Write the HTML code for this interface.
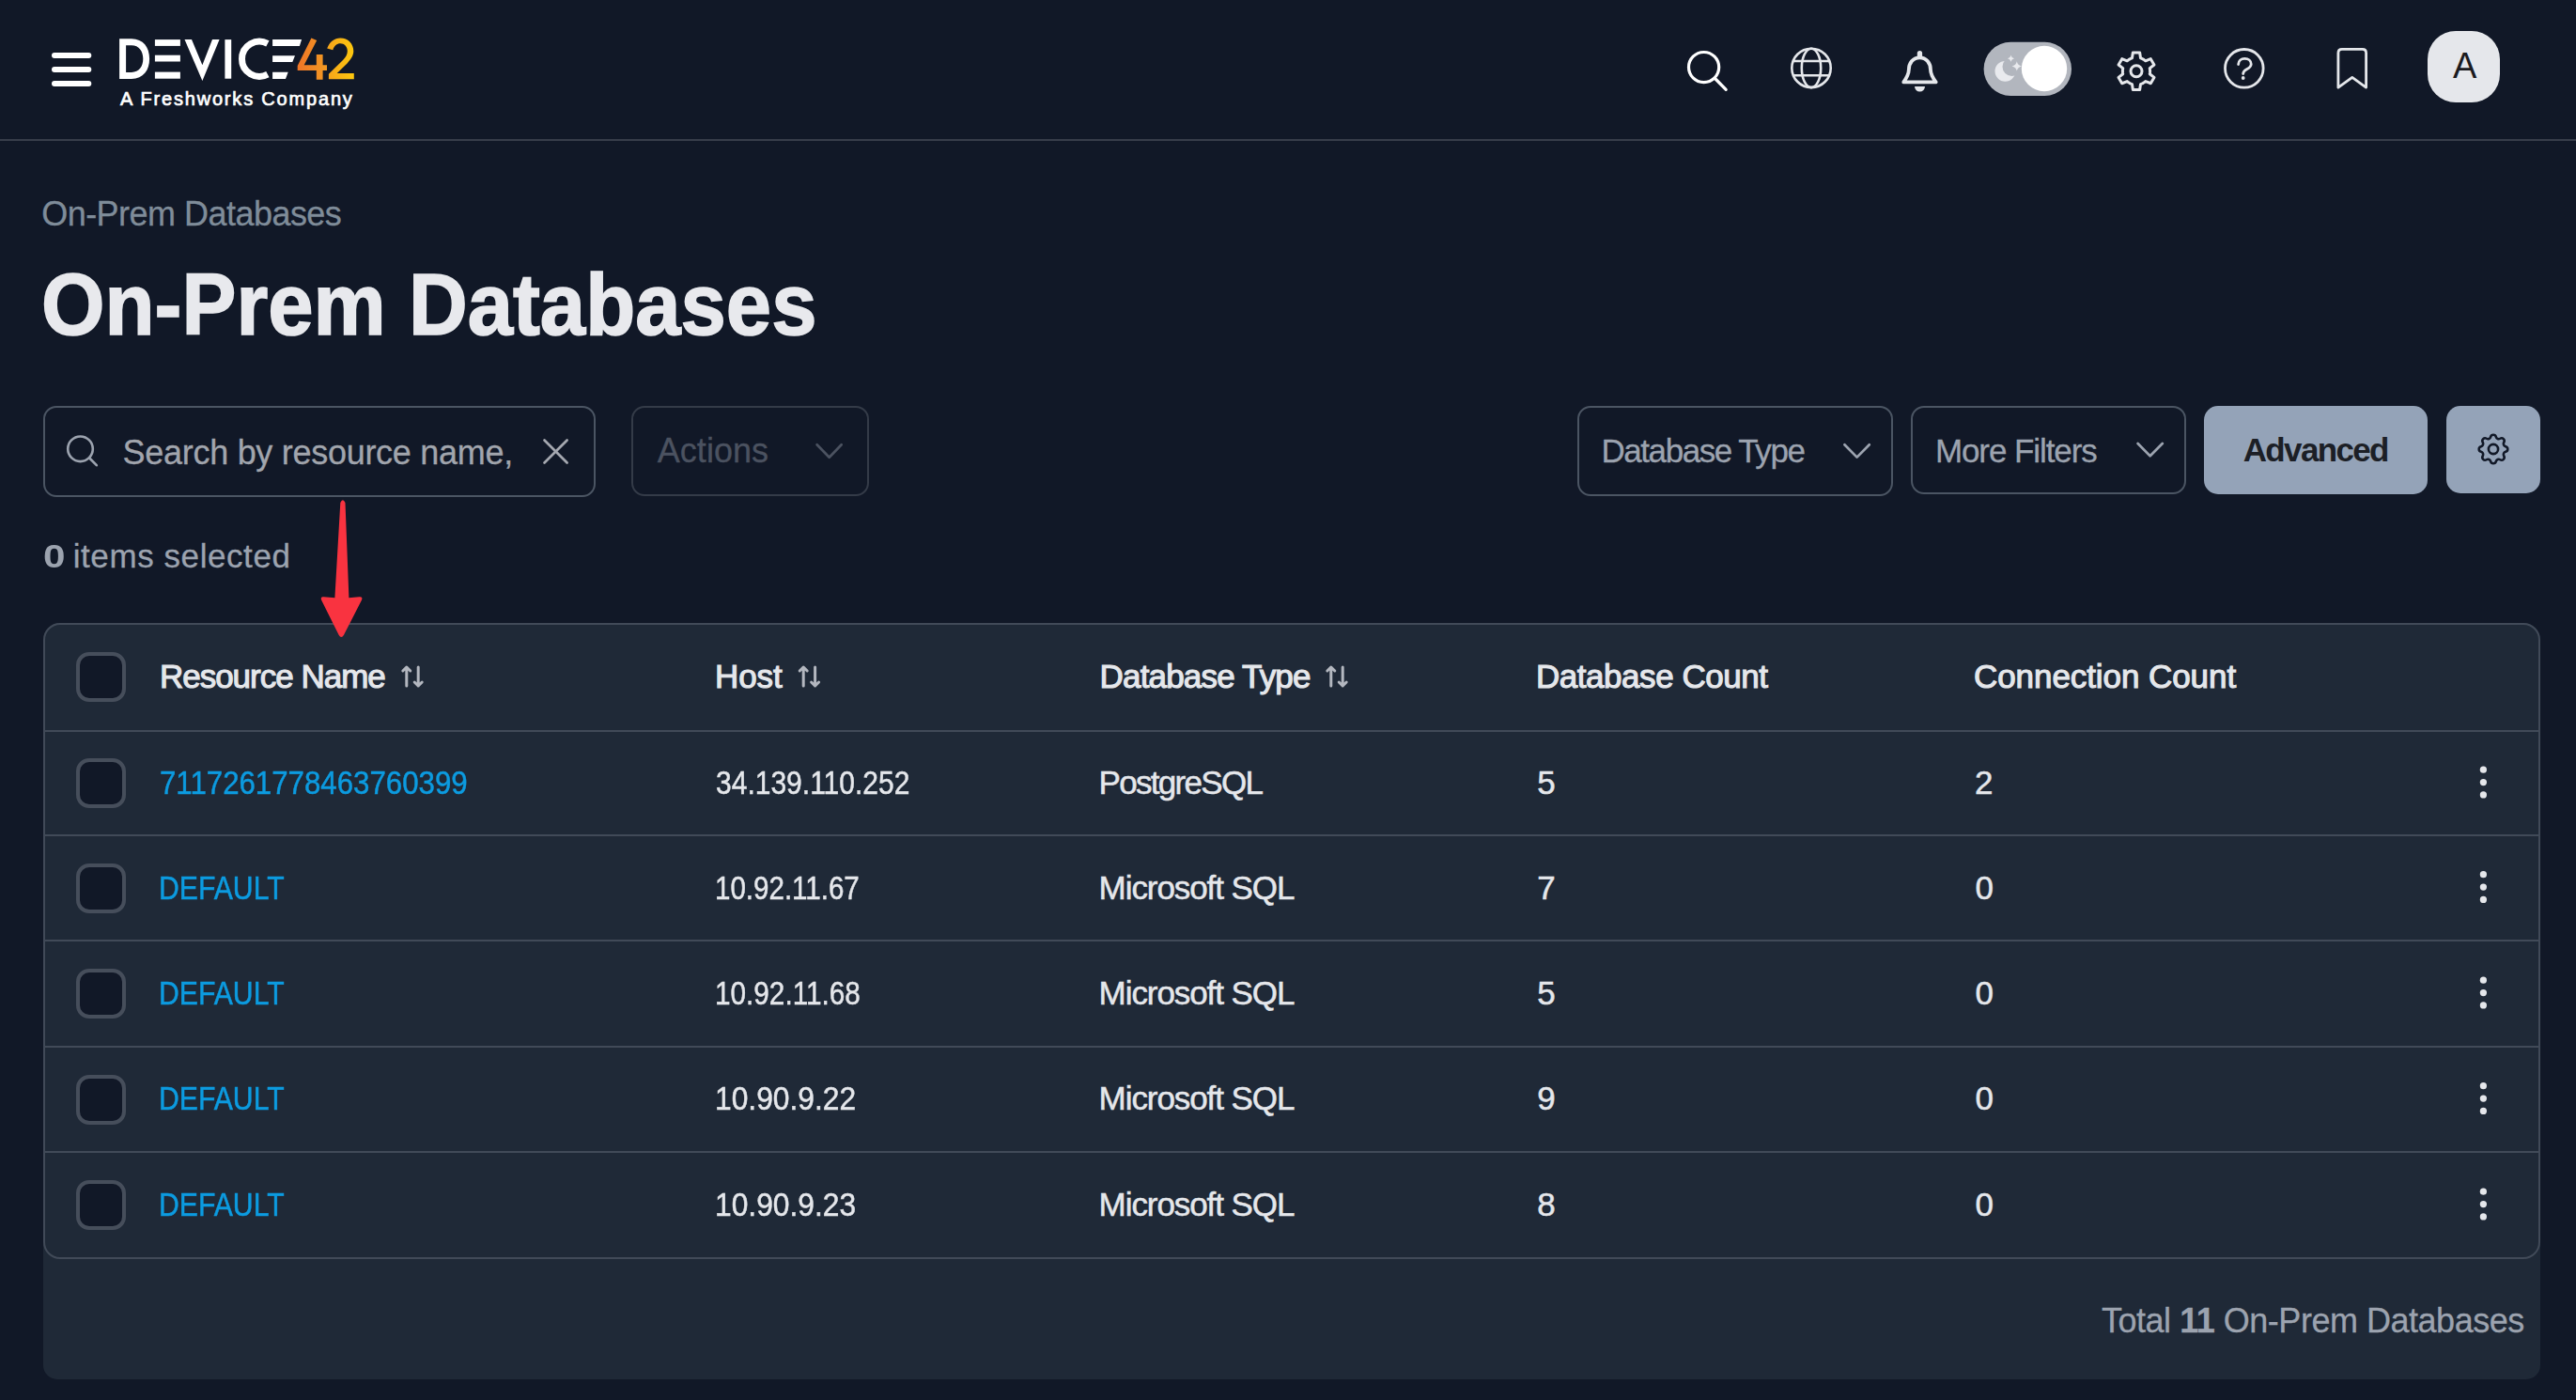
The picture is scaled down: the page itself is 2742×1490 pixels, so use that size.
<!DOCTYPE html>
<html><head><meta charset="utf-8"><title>On-Prem Databases</title>
<style>
html,body{margin:0;padding:0;}
body{width:2742px;height:1490px;overflow:hidden;background:#111827;position:relative;font-family:'Liberation Sans',sans-serif;}
.b{position:absolute;box-sizing:border-box;}
.t{position:absolute;white-space:nowrap;font-family:'Liberation Sans',sans-serif;}
.ov{position:absolute;left:0;top:0;}
.cb{position:absolute;box-sizing:border-box;left:81px;width:53px;height:53px;border:4px solid #464e5b;border-radius:14px;background:#111827;}
.rl{position:absolute;left:48px;width:2654px;height:2px;background:#414a58;}
</style></head><body>
<div class="b" style="left:0;top:148px;width:2742px;height:2px;background:#373d4a"></div>
<div class="b" style="left:46px;top:432px;width:588px;height:96.5px;border:2px solid #4b5563;border-radius:14px"></div>
<div class="b" style="left:672px;top:432px;width:253px;height:96px;border:2px solid #343b48;border-radius:14px"></div>
<div class="b" style="left:1679px;top:432px;width:336px;height:96px;border:2px solid #4b5563;border-radius:14px"></div>
<div class="b" style="left:2034px;top:432px;width:293px;height:94px;border:2px solid #4b5563;border-radius:14px"></div>
<div class="b" style="left:2346px;top:432px;width:238px;height:94px;background:#94a3b8;border-radius:15px"></div>
<div class="b" style="left:2604px;top:432px;width:100px;height:93px;background:#94a3b8;border-radius:15px"></div>
<div class="b" style="left:46px;top:663px;width:2658px;height:805px;background:#1f2937;border-radius:18px 18px 15px 15px"></div>
<div class="b" style="left:46px;top:663px;width:2658px;height:677px;border:2px solid #414a58;border-radius:18px"></div>
<div class="rl" style="top:777px"></div>
<div class="rl" style="top:888px"></div>
<div class="rl" style="top:1000px"></div>
<div class="rl" style="top:1113px"></div>
<div class="rl" style="top:1225px"></div>
<div class="cb" style="top:694px"></div>
<div class="cb" style="top:807px"></div>
<div class="cb" style="top:918.5px"></div>
<div class="cb" style="top:1031px"></div>
<div class="cb" style="top:1143.5px"></div>
<div class="cb" style="top:1256px"></div>
<svg class="ov" width="2742" height="1490" viewBox="0 0 2742 1490">
<defs><linearGradient id="g4" x1="0" y1="0" x2="1" y2="0"><stop offset="0" stop-color="#ef7527"/><stop offset="1" stop-color="#f39a22"/></linearGradient><linearGradient id="g2" x1="0" y1="0" x2="1" y2="0"><stop offset="0" stop-color="#f6a41b"/><stop offset="1" stop-color="#fdc80e"/></linearGradient></defs>
<rect x="55" y="56" width="42.3" height="6" rx="3" fill="#fff"/>
<rect x="55" y="71" width="42.3" height="6" rx="3" fill="#fff"/>
<rect x="55" y="86" width="42.3" height="6" rx="3" fill="#fff"/>
<path fill="#fff" fill-rule="evenodd" d="M127.1,41.3 H140 C152.5,41.3 159.1,50.5 159.1,62.6 C159.1,74.8 152.5,84 140,84 H127.1 Z M134.1,48.2 H140 C148,48.2 152.3,54.5 152.3,62.6 C152.3,70.8 148,76.9 140,76.9 H134.1 Z"/>
<rect x="164.9" y="42.1" width="27" height="6.8" fill="#fff"/>
<rect x="164.9" y="58.7" width="27" height="6.8" fill="#fff"/>
<rect x="164.9" y="76.6" width="27" height="7.1" fill="#fff"/>
<path fill="#fff" d="M196.5,42.1 H204 L215.4,69.3 L226,42.1 H233.6 L215.4,86 Z"/>
<rect x="239.4" y="42.1" width="6.8" height="41.6" fill="#fff"/>
<path fill="none" stroke="#fff" stroke-width="7" d="M284.9,46.3 A18.6,18.6 0 1 0 284.9,79.1"/>
<path fill="#fff" d="M290.1,42.1 H321.1 L318.9,48.9 H290.1 Z M290.1,59.2 H314 L311.3,66 H290.1 Z M290.1,76.8 H306.7 L304,83.9 H290.1 Z"/>
<path fill="url(#g4)" d="M331.4,40.4 L337.2,43 L323.7,69.2 H336.8 V58.1 H343.6 V69.2 H348 V75 H343.6 V84.7 H336.8 V75 H316.7 V70 Z"/>
<path fill="url(#g2)" d="M348.2,51.5 C350.5,44.6 356,40.4 362.3,40.4 C370.5,40.4 376.3,46.5 376.3,54.3 C376.3,59.5 373.5,63 369.8,67.2 L358.7,78 H376.8 V84.2 H349.9 V78.8 L365,64 C368.3,60.5 369.8,58 369.8,54.3 C369.8,49.6 366.5,46.3 362.3,46.3 C358.6,46.3 355.8,48.6 354.3,53.3 Z"/>
<g fill="none" stroke="#fff" stroke-width="3.2" stroke-linecap="round"><circle cx="1813.6" cy="71.6" r="16.1"/><line x1="1825.5" y1="83.5" x2="1837.2" y2="95.3"/></g>
<g fill="none" stroke="#e5e7eb" stroke-width="2.6"><circle cx="1928" cy="72.4" r="20.7"/><ellipse cx="1928" cy="72.4" rx="10.2" ry="20.7"/><line x1="1908.5" y1="65" x2="1947.5" y2="65"/><line x1="1908.5" y1="80.3" x2="1947.5" y2="80.3"/></g>
<g fill="#e5e7eb"><rect x="2040.8" y="53.9" width="5.3" height="8" rx="2.65"/><path d="M2038,92 A5.5,5.5 0 0 0 2049,92 Z"/></g>
<path fill="none" stroke="#e5e7eb" stroke-width="3.8" stroke-linejoin="round" d="M2031.8,74.5 C2031.8,67 2036.5,61.3 2043.4,61.3 C2050.3,61.3 2055,67 2055,74.5 C2055,79 2056.8,82 2060.6,87.4 L2026.3,87.4 C2030,82 2031.8,79 2031.8,74.5 Z"/>
<rect x="2111.6" y="44.8" width="93.4" height="57.2" rx="28.6" fill="#b2b6be"/>
<circle cx="2176" cy="73" r="24.2" fill="#fff"/>
<mask id="mm"><rect x="2100" y="40" width="60" height="60" fill="#fff"/><circle cx="2141.4" cy="71.0" r="9.9" fill="#000"/></mask>
<circle cx="2134.4" cy="75.8" r="10.9" fill="#e9eaee" mask="url(#mm)"/>
<path fill="#e9eaee" d="M2140.50,58.80 Q2141.06,61.74 2144.00,62.30 Q2141.06,62.86 2140.50,65.80 Q2139.94,62.86 2137.00,62.30 Q2139.94,61.74 2140.50,58.80 Z M2146.80,65.20 Q2147.63,69.57 2152.00,70.40 Q2147.63,71.23 2146.80,75.60 Q2145.97,71.23 2141.60,70.40 Q2145.97,69.57 2146.80,65.20 Z"/>
<g fill="none" stroke="#e5e7eb" stroke-width="3" stroke-linejoin="round"><path d="M2269.49,61.81 L2270.34,55.94 L2277.66,55.94 L2278.51,61.81 L2279.47,62.16 L2280.40,62.58 L2281.30,63.06 L2282.16,63.60 L2282.99,64.20 L2283.77,64.85 L2289.28,62.65 L2292.95,68.99 L2288.28,72.66 L2288.46,73.67 L2288.56,74.68 L2288.60,75.70 L2288.56,76.72 L2288.46,77.73 L2288.28,78.74 L2292.95,82.41 L2289.28,88.75 L2283.77,86.55 L2282.99,87.20 L2282.16,87.80 L2281.30,88.34 L2280.40,88.82 L2279.47,89.24 L2278.51,89.59 L2277.66,95.46 L2270.34,95.46 L2269.49,89.59 L2268.53,89.24 L2267.60,88.82 L2266.70,88.34 L2265.84,87.80 L2265.01,87.20 L2264.23,86.55 L2258.72,88.75 L2255.05,82.41 L2259.72,78.74 L2259.54,77.73 L2259.44,76.72 L2259.40,75.70 L2259.44,74.68 L2259.54,73.67 L2259.72,72.66 L2255.05,68.99 L2258.72,62.65 L2264.23,64.85 L2265.01,64.20 L2265.84,63.60 L2266.70,63.06 L2267.60,62.58 L2268.53,62.16 Z"/><circle cx="2274.0" cy="75.7" r="6"/></g>
<g fill="none" stroke="#e5e7eb" stroke-width="2.8" stroke-linecap="round"><circle cx="2388.8" cy="72.8" r="20.3"/><path d="M2382.6,68.6 C2382.6,64.7 2385.6,62.4 2389.3,62.4 C2393.4,62.4 2396.2,65 2396.2,68.2 C2396.2,71.3 2393.5,72.6 2391,74 C2388.8,75.3 2387.7,76.4 2387.7,78.6"/></g><circle cx="2387.7" cy="83" r="1.9" fill="#e5e7eb"/>
<path fill="none" stroke="#e5e7eb" stroke-width="2.8" stroke-linejoin="round" d="M2488.9,93.1 V56.4 Q2488.9,52.4 2492.9,52.4 H2514.6 Q2518.6,52.4 2518.6,56.4 V93.1 L2503.8,82.4 Z"/>
<rect x="2584" y="33" width="77" height="76" rx="30" fill="#e5e7eb"/>
<g fill="none" stroke="#9ca3af" stroke-width="2.6" stroke-linecap="round"><circle cx="85.5" cy="477.8" r="13.3"/><line x1="95.2" y1="487.5" x2="102.8" y2="495.2"/></g>
<g fill="none" stroke="#a5a8b0" stroke-width="2.7" stroke-linecap="round"><line x1="579.5" y1="468.5" x2="603.6" y2="492.5"/><line x1="603.6" y1="468.5" x2="579.5" y2="492.5"/></g>
<path fill="none" stroke="#4b5260" stroke-width="2.7" stroke-linecap="round" stroke-linejoin="round" d="M869.6,473.3 L882.7,486.8 L895.7,473.3"/>
<path fill="none" stroke="#9ca3af" stroke-width="2.7" stroke-linecap="round" stroke-linejoin="round" d="M1963.4,473.2 L1976.6,486.6 L1989.8,473.2"/>
<path fill="none" stroke="#9ca3af" stroke-width="2.7" stroke-linecap="round" stroke-linejoin="round" d="M2275.6,472.0 L2288.7,485.3 L2301.8,472.0"/>
<g transform="translate(2633.60,457.60) scale(1.700)" fill="none" stroke="#111827" stroke-width="1.529" stroke-linecap="round" stroke-linejoin="round"><path d="M10.325 4.317c.426-1.756 2.924-1.756 3.35 0a1.724 1.724 0 002.573 1.066c1.543-.94 3.31.826 2.37 2.37a1.724 1.724 0 001.065 2.572c1.756.426 1.756 2.924 0 3.35a1.724 1.724 0 00-1.066 2.573c.94 1.543-.826 3.31-2.37 2.37a1.724 1.724 0 00-2.572 1.065c-.426 1.756-2.924 1.756-3.35 0a1.724 1.724 0 00-2.573-1.066c-1.543.94-3.31-.826-2.37-2.37a1.724 1.724 0 00-1.065-2.572c-1.756-.426-1.756-2.924 0-3.350a1.724 1.724 0 001.066-2.573c-.94-1.543.826-3.31 2.37-2.37.996.608 2.296.07 2.572-1.065z"/><path d="M15 12a3 3 0 11-6 0 3 3 0 016 0z"/></g>
<path fill="#f93340" d="M362.3,535 Q364.9,529.5 367.5,535 L371.4,636.2 L382.4,635.2 Q386.8,634.8 384.8,639 L366,675.7 Q363.3,680.5 360.6,675.7 L342.3,639 Q340.5,634.8 344.6,635.2 L356.4,636.2 Z"/>
<g fill="none" stroke="#b3b7bf" stroke-width="3" stroke-linecap="round" stroke-linejoin="round"><path d="M432.8,710 V730 M428.8,714 L432.8,710 L436.8,714"/><path d="M445.2,710 V730 M441.2,726 L445.2,730 L449.2,726"/></g>
<g fill="none" stroke="#b3b7bf" stroke-width="3" stroke-linecap="round" stroke-linejoin="round"><path d="M855.2,710 V730 M851.2,714 L855.2,710 L859.2,714"/><path d="M867.6,710 V730 M863.6,726 L867.6,730 L871.6,726"/></g>
<g fill="none" stroke="#b3b7bf" stroke-width="3" stroke-linecap="round" stroke-linejoin="round"><path d="M1416.8,710 V730 M1412.8,714 L1416.8,710 L1420.8,714"/><path d="M1429.2,710 V730 M1425.2,726 L1429.2,730 L1433.2,726"/></g>
<circle cx="2643.4" cy="819.2" r="3.6" fill="#e5e7eb"/>
<circle cx="2643.4" cy="832.6" r="3.6" fill="#e5e7eb"/>
<circle cx="2643.4" cy="845.9" r="3.6" fill="#e5e7eb"/>
<circle cx="2643.4" cy="930.7" r="3.6" fill="#e5e7eb"/>
<circle cx="2643.4" cy="944.1" r="3.6" fill="#e5e7eb"/>
<circle cx="2643.4" cy="957.4" r="3.6" fill="#e5e7eb"/>
<circle cx="2643.4" cy="1043.2" r="3.6" fill="#e5e7eb"/>
<circle cx="2643.4" cy="1056.6" r="3.6" fill="#e5e7eb"/>
<circle cx="2643.4" cy="1069.9" r="3.6" fill="#e5e7eb"/>
<circle cx="2643.4" cy="1155.7" r="3.6" fill="#e5e7eb"/>
<circle cx="2643.4" cy="1169.1" r="3.6" fill="#e5e7eb"/>
<circle cx="2643.4" cy="1182.4" r="3.6" fill="#e5e7eb"/>
<circle cx="2643.4" cy="1268.2" r="3.6" fill="#e5e7eb"/>
<circle cx="2643.4" cy="1281.6" r="3.6" fill="#e5e7eb"/>
<circle cx="2643.4" cy="1294.9" r="3.6" fill="#e5e7eb"/>
</svg>
<div class="t" style="left:128.0px;top:95.4px;font-size:20px;line-height:20px;color:#ffffff;-webkit-text-stroke:0.7px currentColor;letter-spacing:1.82px">A Freshworks Company</div>
<div class="t" style="left:2611.0px;top:51.2px;font-size:38px;line-height:38px;color:#1b1b1f">A</div>
<div class="t" style="left:44.2px;top:210.4px;font-size:36px;line-height:36px;color:#7f8c99;-webkit-text-stroke:0.3px currentColor;letter-spacing:-0.53px">On-Prem Databases</div>
<div class="t" style="left:44.2px;top:277.6px;font-size:93px;line-height:93px;color:#e8e9ed;font-weight:bold;-webkit-text-stroke:1.6px currentColor;transform:scaleX(0.9339);transform-origin:0 0">On-Prem Databases</div>
<div class="t" style="left:130.6px;top:463.5px;font-size:36px;line-height:36px;color:#a1a5ad;-webkit-text-stroke:0.3px currentColor;letter-spacing:-0.29px">Search by resource name,</div>
<div class="t" style="left:699.8px;top:462.1px;font-size:36px;line-height:36px;color:#4b5260;-webkit-text-stroke:0.3px currentColor;letter-spacing:0.03px">Actions</div>
<div class="t" style="left:1704.5px;top:462.1px;font-size:35px;line-height:35px;color:#9ca3af;-webkit-text-stroke:0.3px currentColor;letter-spacing:-1.45px">Database Type</div>
<div class="t" style="left:2059.9px;top:462.4px;font-size:35px;line-height:35px;color:#9ca3af;-webkit-text-stroke:0.3px currentColor;letter-spacing:-1.08px">More Filters</div>
<div class="t" style="left:2387.7px;top:461.2px;font-size:35px;line-height:35px;color:#1c1f26;font-weight:bold;letter-spacing:-1.64px">Advanced</div>
<div class="t" style="left:45.5px;top:573.8px;font-size:35px;line-height:35px;color:#9ca3af;transform:scaleX(1.2059);transform-origin:0 0"><b>0</b></div>
<div class="t" style="left:77.7px;top:573.8px;font-size:35px;line-height:35px;color:#9ca3af;-webkit-text-stroke:0.3px currentColor;letter-spacing:0.58px">items selected</div>
<div class="t" style="left:169.9px;top:701.7px;font-size:35px;line-height:35px;color:#e5e7eb;-webkit-text-stroke:1.1px currentColor;letter-spacing:-1.00px">Resource Name</div>
<div class="t" style="left:760.9px;top:701.7px;font-size:35px;line-height:35px;color:#e5e7eb;-webkit-text-stroke:1.1px currentColor;letter-spacing:-0.03px">Host</div>
<div class="t" style="left:1170.6px;top:701.7px;font-size:35px;line-height:35px;color:#e5e7eb;-webkit-text-stroke:1.1px currentColor;letter-spacing:-0.83px">Database Type</div>
<div class="t" style="left:1635.0px;top:701.7px;font-size:35px;line-height:35px;color:#e5e7eb;-webkit-text-stroke:1.1px currentColor;letter-spacing:-0.46px">Database Count</div>
<div class="t" style="left:2101.0px;top:701.7px;font-size:35px;line-height:35px;color:#e5e7eb;-webkit-text-stroke:1.1px currentColor;letter-spacing:-0.07px">Connection Count</div>
<div class="t" style="left:170.2px;top:814.9px;font-size:35px;line-height:35px;color:#0c9be0;-webkit-text-stroke:0.5px currentColor;transform:scaleX(0.8921);transform-origin:0 0">7117261778463760399</div>
<div class="t" style="left:762.0px;top:814.9px;font-size:35px;line-height:35px;color:#e5e7eb;-webkit-text-stroke:0.5px currentColor;transform:scaleX(0.8576);transform-origin:0 0">34.139.110.252</div>
<div class="t" style="left:1169.6px;top:814.9px;font-size:35px;line-height:35px;color:#e5e7eb;-webkit-text-stroke:0.5px currentColor;letter-spacing:-1.71px">PostgreSQL</div>
<div class="t" style="left:1636.3px;top:814.9px;font-size:35px;line-height:35px;color:#e5e7eb;-webkit-text-stroke:0.5px currentColor">5</div>
<div class="t" style="left:2102.0px;top:814.9px;font-size:35px;line-height:35px;color:#e5e7eb;-webkit-text-stroke:0.5px currentColor">2</div>
<div class="t" style="left:168.5px;top:926.7px;font-size:35px;line-height:35px;color:#0c9be0;-webkit-text-stroke:0.5px currentColor;transform:scaleX(0.8625);transform-origin:0 0">DEFAULT</div>
<div class="t" style="left:761.2px;top:926.7px;font-size:35px;line-height:35px;color:#e5e7eb;-webkit-text-stroke:0.5px currentColor;transform:scaleX(0.8436);transform-origin:0 0">10.92.11.67</div>
<div class="t" style="left:1169.6px;top:926.7px;font-size:35px;line-height:35px;color:#e5e7eb;-webkit-text-stroke:0.5px currentColor;letter-spacing:-1.07px">Microsoft SQL</div>
<div class="t" style="left:1636.3px;top:926.7px;font-size:35px;line-height:35px;color:#e5e7eb;-webkit-text-stroke:0.5px currentColor">7</div>
<div class="t" style="left:2102.5px;top:926.7px;font-size:35px;line-height:35px;color:#e5e7eb;-webkit-text-stroke:0.5px currentColor">0</div>
<div class="t" style="left:168.5px;top:1039.0px;font-size:35px;line-height:35px;color:#0c9be0;-webkit-text-stroke:0.5px currentColor;transform:scaleX(0.8625);transform-origin:0 0">DEFAULT</div>
<div class="t" style="left:761.2px;top:1039.0px;font-size:35px;line-height:35px;color:#e5e7eb;-webkit-text-stroke:0.5px currentColor;transform:scaleX(0.8492);transform-origin:0 0">10.92.11.68</div>
<div class="t" style="left:1169.6px;top:1039.0px;font-size:35px;line-height:35px;color:#e5e7eb;-webkit-text-stroke:0.5px currentColor;letter-spacing:-1.07px">Microsoft SQL</div>
<div class="t" style="left:1636.3px;top:1039.0px;font-size:35px;line-height:35px;color:#e5e7eb;-webkit-text-stroke:0.5px currentColor">5</div>
<div class="t" style="left:2102.5px;top:1039.0px;font-size:35px;line-height:35px;color:#e5e7eb;-webkit-text-stroke:0.5px currentColor">0</div>
<div class="t" style="left:168.5px;top:1151.3px;font-size:35px;line-height:35px;color:#0c9be0;-webkit-text-stroke:0.5px currentColor;transform:scaleX(0.8625);transform-origin:0 0">DEFAULT</div>
<div class="t" style="left:761.1px;top:1151.3px;font-size:35px;line-height:35px;color:#e5e7eb;-webkit-text-stroke:0.5px currentColor;transform:scaleX(0.9074);transform-origin:0 0">10.90.9.22</div>
<div class="t" style="left:1169.6px;top:1151.3px;font-size:35px;line-height:35px;color:#e5e7eb;-webkit-text-stroke:0.5px currentColor;letter-spacing:-1.07px">Microsoft SQL</div>
<div class="t" style="left:1636.3px;top:1151.3px;font-size:35px;line-height:35px;color:#e5e7eb;-webkit-text-stroke:0.5px currentColor">9</div>
<div class="t" style="left:2102.5px;top:1151.3px;font-size:35px;line-height:35px;color:#e5e7eb;-webkit-text-stroke:0.5px currentColor">0</div>
<div class="t" style="left:168.5px;top:1264.0px;font-size:35px;line-height:35px;color:#0c9be0;-webkit-text-stroke:0.5px currentColor;transform:scaleX(0.8625);transform-origin:0 0">DEFAULT</div>
<div class="t" style="left:761.1px;top:1264.0px;font-size:35px;line-height:35px;color:#e5e7eb;-webkit-text-stroke:0.5px currentColor;transform:scaleX(0.9074);transform-origin:0 0">10.90.9.23</div>
<div class="t" style="left:1169.6px;top:1264.0px;font-size:35px;line-height:35px;color:#e5e7eb;-webkit-text-stroke:0.5px currentColor;letter-spacing:-1.07px">Microsoft SQL</div>
<div class="t" style="left:1636.3px;top:1264.0px;font-size:35px;line-height:35px;color:#e5e7eb;-webkit-text-stroke:0.5px currentColor">8</div>
<div class="t" style="left:2102.5px;top:1264.0px;font-size:35px;line-height:35px;color:#e5e7eb;-webkit-text-stroke:0.5px currentColor">0</div>
<div class="t" style="left:2237.0px;top:1387.5px;font-size:36px;line-height:36px;color:#9ca3af;-webkit-text-stroke:0.3px currentColor;letter-spacing:-0.48px">Total <b>11</b> On-Prem Databases</div>
</body></html>
